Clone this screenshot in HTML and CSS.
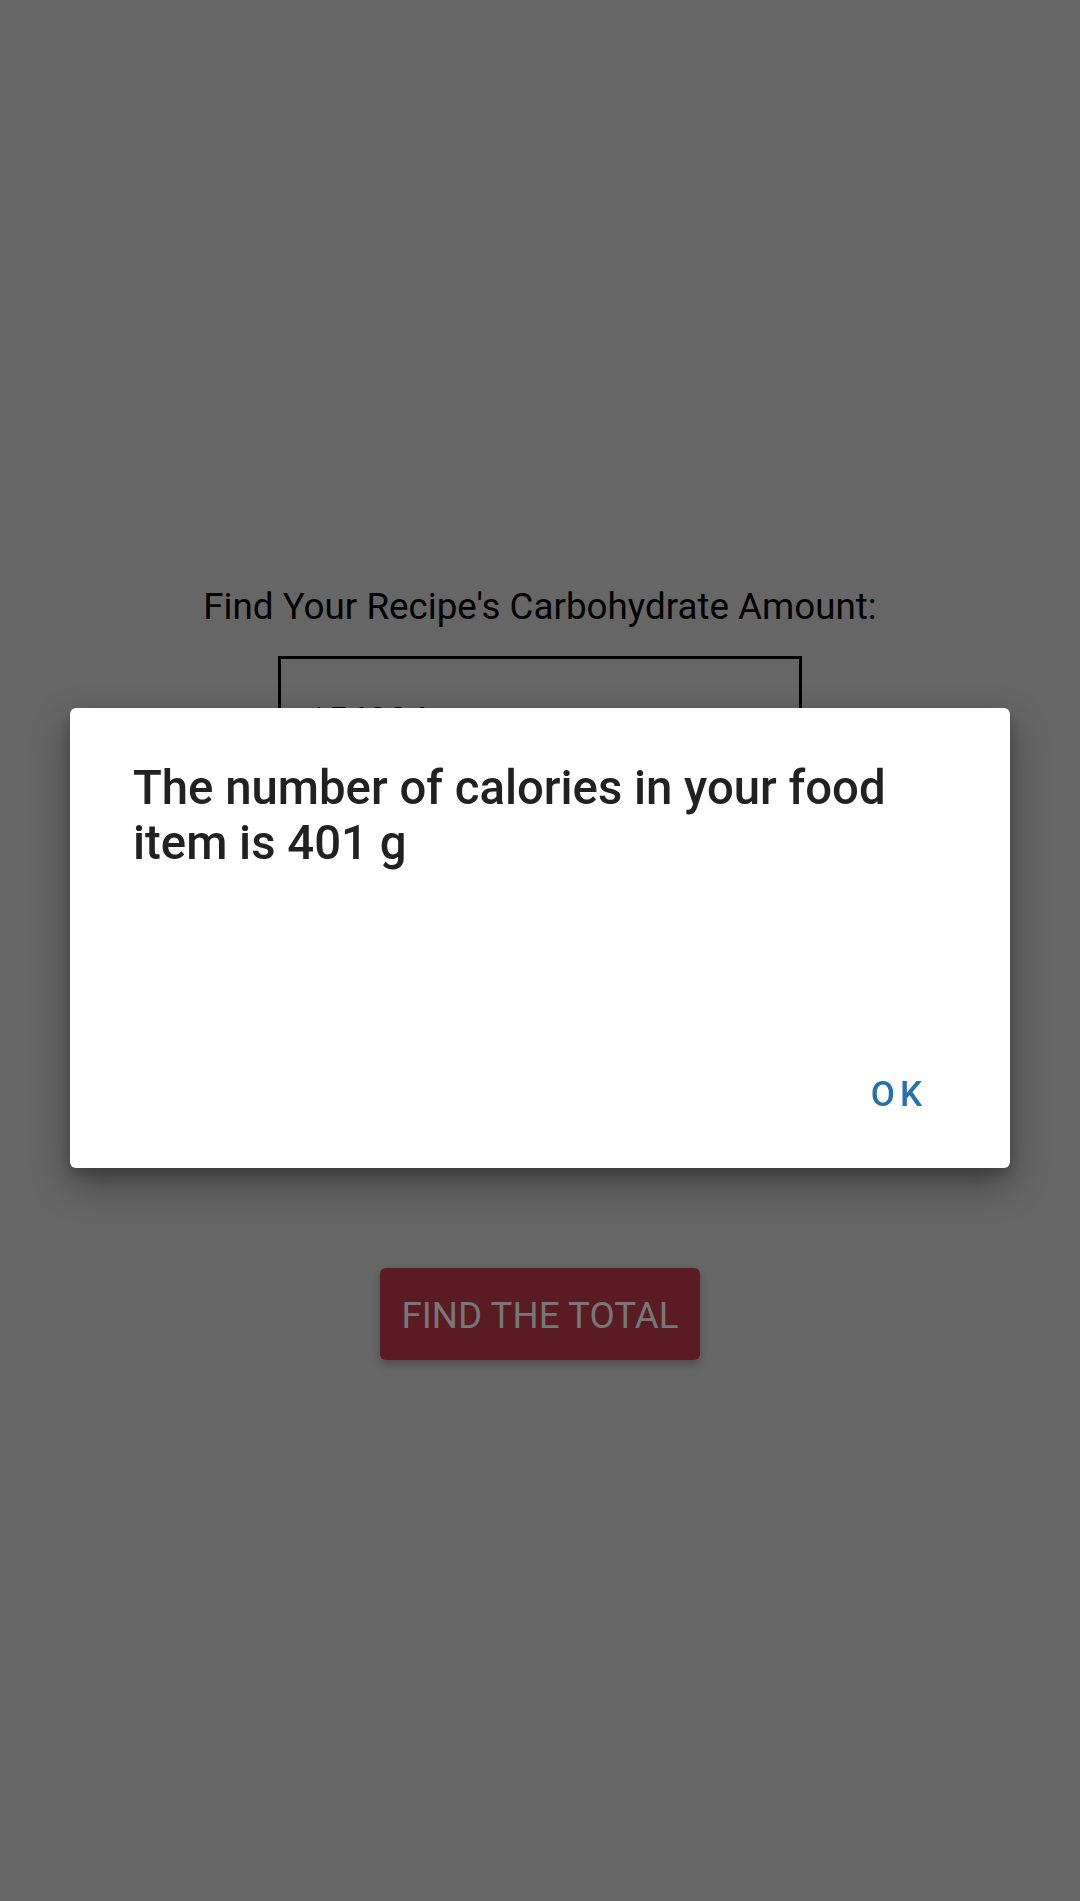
FILE: index.html
```html
<!DOCTYPE html>
<html>
<head>
<meta charset="utf-8">
<link rel="stylesheet" href="styles.css">
</head>
<body>
<main class="page">
  <div class="label">Find Your Recipe's Carbohydrate Amount:</div>
  <div class="input"><span class="value">154304</span></div>
  <div class="btn">FIND THE TOTAL</div>
</main>
<div class="dialog">
  <div class="dialog-title">The number of calories in your food item is 401 g</div>
  <div class="dialog-actions"><span class="ok">OK</span></div>
</div>
</body>
</html>
```

FILE: styles.css
```css
html, body {
  margin: 0;
  padding: 0;
  background: #666666;
  font-family: Roboto, "Liberation Sans", sans-serif;
}
body {
  width: 1080px;
  height: 1901px;
  overflow: hidden;
}
.page {
  display: flex;
  flex-direction: column;
  align-items: center;
  padding-top: 587px;
}
.label {
  font-size: 36.75px;
  line-height: 40px;
  color: #000;
}
.input {
  margin-top: 29px;
  width: 524px;
  height: 190px;
  box-sizing: border-box;
  border: 3px solid #000;
  padding: 42px 0 0 26px;
  font-size: 36px;
  line-height: 40px;
  color: #000;
}
.btn {
  margin-top: 422px;
  width: 320px;
  height: 92px;
  box-sizing: border-box;
  padding-top: 3px;
  background: #5a1c22;
  border-radius: 6px;
  box-shadow: 0 4px 8px rgba(0,0,0,0.25);
  color: #777777;
  font-size: 36.75px;
  display: flex;
  align-items: center;
  justify-content: center;
}
.dialog {
  position: fixed;
  left: 70px;
  top: 708px;
  width: 940px;
  height: 460px;
  box-sizing: border-box;
  background: #ffffff;
  border-radius: 6px;
  box-shadow: 0 16px 36px rgba(0,0,0,0.35), 0 6px 14px rgba(0,0,0,0.2);
  padding: 53px 60px 0 63px;
  display: flex;
  flex-direction: column;
}
.dialog-title {
  font-size: 47.3px;
  line-height: 55px;
  font-weight: 500;
  color: #212121;
}
.dialog-actions {
  margin-top: auto;
  margin-bottom: 54px;
  display: flex;
  justify-content: flex-end;
  padding-right: 23px;
}
.ok {
  font-size: 35px;
  font-weight: 500;
  letter-spacing: 5px;
  color: #2471ab;
  line-height: 38px;
}
```
